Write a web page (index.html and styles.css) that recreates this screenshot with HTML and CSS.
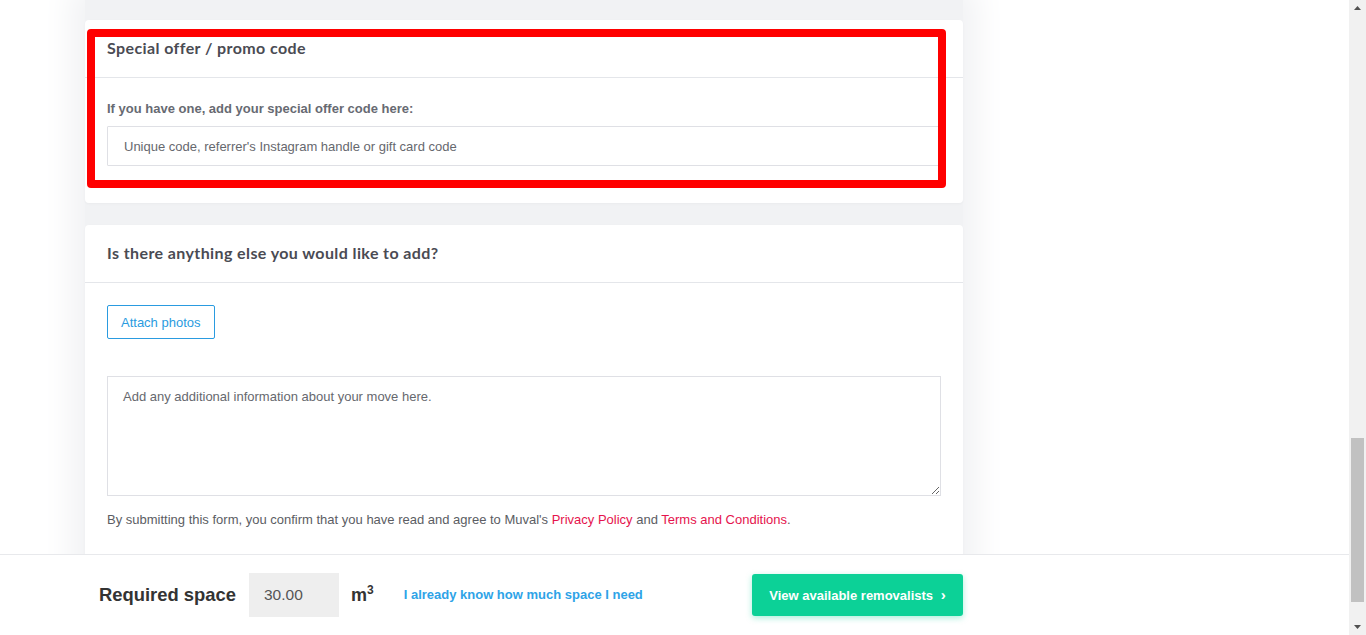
FILE: index.html
```html
<!DOCTYPE html>
<html lang="en">
  <head>
    <meta charset="UTF-8" />
    <meta name="viewport" content="width=device-width, initial-scale=1.0" />
    <title>Move details</title>
    <link rel="stylesheet" href="styles.css">
  </head>
  <body>
    <div class="window">
      <div class="viewport">
        <main class="page">
          <div class="column">
            <section class="card">
              <h3 class="card-title">Special offer / promo code</h3>
              <div class="card-body promo-body">
                <label class="field-label" for="promo">If you have one, add your special offer code here:</label>
                <input class="text-input" id="promo" type="text" placeholder="Unique code, referrer's Instagram handle or gift card code" />
              </div>
              <div class="highlight"></div>
            </section>

            <section class="card">
              <h3 class="card-title">Is there anything else you would like to add?</h3>
              <div class="card-body notes-body">
                <button class="outline-btn">Attach photos</button>
                <textarea class="notes" placeholder="Add any additional information about your move here."></textarea>
                <p class="terms">
                  By submitting this form, you confirm that you have read and agree to Muval's
                  <a href="#">Privacy Policy</a> and <a href="#">Terms and Conditions</a>.
                </p>
              </div>
            </section>
          </div>
        </main>

        <footer class="bar">
          <div class="bar-inner">
            <span class="bar-label">Required space</span>
            <input class="space-input" type="text" value="30.00" />
            <span class="unit">m<sup>3</sup></span>
            <a class="know-link" href="#">I already know how much space I need</a>
            <button class="go-btn">View available removalists <span class="chev">&#8250;</span></button>
          </div>
        </footer>
      </div>

      <!-- fake scrollbar -->
      <div class="scrollbar">
        <svg class="arrow" width="17" height="17" viewBox="0 0 17 17"><path d="M5 10 L8.5 6 L12 10 Z" fill="#505050"/></svg>
        <div class="track"><div class="thumb"></div></div>
        <svg class="arrow" width="17" height="17" viewBox="0 0 17 17"><path d="M5 7 L12 7 L8.5 11 Z" fill="#505050"/></svg>
      </div>
    </div>
  </body>
</html>
```

FILE: styles.css
```css
* {
  box-sizing: border-box;
  margin: 0;
  padding: 0;
}

html,
body {
  height: 100%;
  overflow: hidden;
  font-family: "Liberation Sans", Arial, sans-serif;
  background-color: #ffffff;
}

.window {
  display: flex;
  height: 635px;
}

.viewport {
  flex: 1;
  display: flex;
  flex-direction: column;
  min-width: 0;
}

.page {
  flex: 1;
  overflow: hidden;
  padding-left: 85px;
}

.column {
  width: 878px;
  padding-top: 20px;
  display: flex;
  flex-direction: column;
  gap: 22px;
  background-color: #f1f2f4;
  box-shadow: 0 0 30px 14px #f1f2f4;
  min-height: 700px;
}

.card {
  position: relative;
  background-color: #ffffff;
  border-radius: 4px;
  box-shadow: 0 1px 3px rgba(0, 0, 0, 0.03);
}

.card-title {
  height: 58px;
  padding: 0 22px 3px;
  display: flex;
  align-items: center;
  border-bottom: 1px solid #e4e6ea;
  font-family: "Lato", sans-serif;
  font-weight: 700;
  font-size: 16px;
  letter-spacing: 0.4px;
  color: #4a4b53;
}

.card-body {
  padding: 22px 22px 0;
  display: flex;
  flex-direction: column;
  align-items: flex-start;
}

.promo-body {
  padding-top: 23px;
  padding-bottom: 37px;
}

.notes-body {
  padding-bottom: 60px;
}

.field-label {
  font-size: 13px;
  font-weight: bold;
  color: #676a72;
  margin-bottom: 10px;
}

.text-input {
  width: 100%;
  height: 40px;
  padding: 0 16px;
  border: 1px solid #dfe0e5;
  border-radius: 1px;
  font-family: inherit;
  font-size: 13px;
  color: #555;
  outline: none;
}

.text-input::placeholder,
.notes::placeholder {
  color: #66686e;
}

.highlight {
  position: absolute;
  left: 2px;
  top: 9px;
  width: 859px;
  height: 159px;
  border: 8px solid #ff0000;
  border-radius: 4px;
  pointer-events: none;
}

.outline-btn {
  height: 34px;
  padding: 0 13px;
  background-color: #ffffff;
  border: 1px solid #2a9be0;
  border-radius: 2px;
  color: #2a9be0;
  font-family: inherit;
  font-size: 13px;
  cursor: pointer;
}

.notes {
  width: 100%;
  height: 120px;
  margin-top: 37px;
  padding: 12px 15px;
  border: 1px solid #dfe0e5;
  font-family: inherit;
  font-size: 13px;
  color: #555;
  outline: none;
}

.terms {
  margin-top: 16px;
  font-size: 13px;
  color: #5b5d63;
  line-height: 15px;
}

.terms a {
  color: #e5134d;
  text-decoration: none;
}

.bar {
  height: 81px;
  flex-shrink: 0;
  background-color: #ffffff;
  border-top: 1px solid #e8e9ec;
  display: flex;
  align-items: center;
  padding-left: 99px;
}

.bar-inner {
  width: 864px;
  display: flex;
  align-items: center;
}

.bar-label {
  font-size: 18.4px;
  font-weight: bold;
  color: #333333;
}

.space-input {
  width: 90px;
  height: 44px;
  margin-left: 13px;
  padding: 0 15px;
  border: none;
  background-color: #eeeeee;
  font-family: inherit;
  font-size: 15.5px;
  color: #555;
  outline: none;
}

.unit {
  margin-left: 12px;
  font-size: 18px;
  font-weight: bold;
  color: #333333;
  margin-top: -2px;
}

.unit sup {
  font-size: 12px;
}

.know-link {
  margin-left: 30px;
  font-size: 13px;
  font-weight: bold;
  color: #2ea3e7;
  text-decoration: none;
  margin-top: -2px;
}

.go-btn {
  margin-left: auto;
  width: 211px;
  height: 42px;
  border: none;
  border-radius: 3px;
  background-color: #0cd197;
  box-shadow: 0 2px 6px rgba(12, 209, 151, 0.35);
  color: #ffffff;
  font-family: inherit;
  font-size: 13px;
  font-weight: bold;
  cursor: pointer;
  padding-bottom: 2px;
}

.chev {
  margin-left: 4px;
  font-size: 15px;
}

.scrollbar {
  width: 17px;
  background-color: #f1f1f1;
  display: flex;
  flex-direction: column;
}

.track {
  flex: 1;
  padding: 421px 2px 16px;
  display: flex;
}

.thumb {
  flex: 1;
  background-color: #c1c1c1;
}
```
